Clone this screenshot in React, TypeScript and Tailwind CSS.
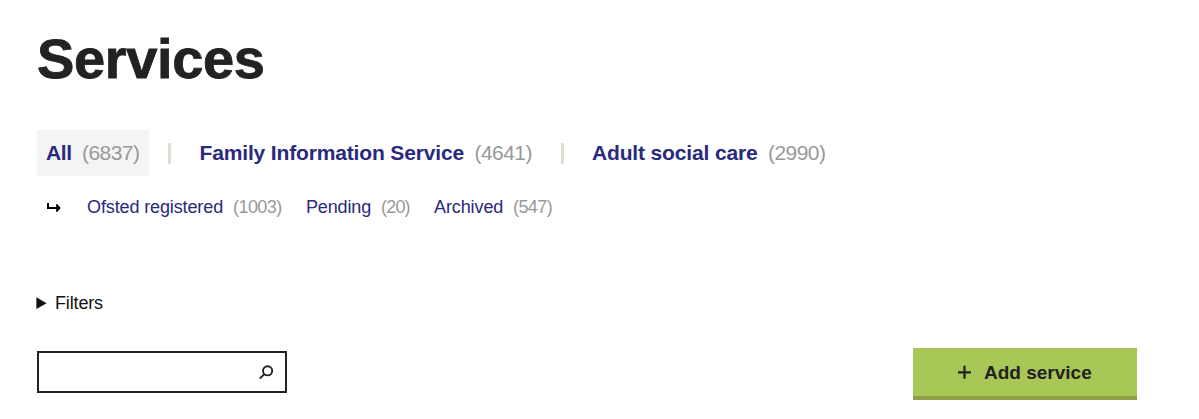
type LinkItem = { label: string; count: string; labelClass: string; countClass: string; boxClass: string };

const primary: LinkItem[] = [
  { label: "All", count: "(6837)", boxClass: "w-[112px] bg-[#f4f4f4] pl-[9px]", labelClass: "w-[36px] tracking-[-0.4px]", countClass: "tracking-[-0.55px]" },
  { label: "Family Information Service", count: "(4641)", boxClass: "w-[390px] pl-[28.5px]", labelClass: "w-[275px] tracking-[-0.15px]", countClass: "tracking-[-0.55px]" },
  { label: "Adult social care", count: "(2990)", boxClass: "pl-[28px]", labelClass: "w-[176px] tracking-[-0.15px]", countClass: "tracking-[-0.55px]" },
];

const secondary: LinkItem[] = [
  { label: "Ofsted registered", count: "(1003)", boxClass: "w-[219px]", labelClass: "w-[146px] tracking-[-0.12px]", countClass: "tracking-[-0.55px]" },
  { label: "Pending", count: "(20)", boxClass: "w-[128px]", labelClass: "w-[75px] tracking-[-0.15px]", countClass: "tracking-[-0.8px]" },
  { label: "Archived", count: "(547)", boxClass: "", labelClass: "w-[79px] tracking-[-0.1px]", countClass: "tracking-[-0.6px]" },
];

function Item({ item }: { item: LinkItem }) {
  return (
    <a href="#" className={`flex h-full shrink-0 items-center whitespace-nowrap ${item.boxClass}`}>
      <span className={`shrink-0 text-[#29297d] ${item.labelClass}`}>{item.label}</span>
      <span className={`font-normal text-[#999999] ${item.countClass}`}>{item.count}</span>
    </a>
  );
}

export default function App() {
  return (
    <main className="h-[419px] w-[1199px] overflow-hidden bg-white pl-[37px] font-['Liberation_Sans',Arial,sans-serif] text-[#222222]">
      <h1 className="h-[130px] pt-[27px] text-[56px] leading-[64px] font-bold tracking-[-0.35px] [-webkit-text-stroke:0.8px_#222222]">Services</h1>

      <nav className="flex h-[46px] items-center text-[21px] font-bold">
        <Item item={primary[0]} />
        <span className="mt-px ml-[19px] h-[21px] w-[3px] shrink-0 rounded-[1px] bg-[#e0ddd0]" />
        <Item item={primary[1]} />
        <span className="mt-px h-[21px] w-[3px] shrink-0 rounded-[1px] bg-[#e0ddd0]" />
        <Item item={primary[2]} />
      </nav>

      <nav className="mt-[15px] flex h-[32px] items-center text-[18px]">
        <svg className="mr-[26px] ml-[9px] shrink-0" width="15" height="10" viewBox="0 0 15 10">
          <path d="M2 1V6H12" fill="none" stroke="#000" strokeWidth="2" />
          <path d="M10.2 2H11.2L14.7 6L11.2 10H10.2Z" fill="#000" />
        </svg>
        {secondary.map((item) => (
          <Item key={item.label} item={item} />
        ))}
      </nav>

      <button className="mt-[68px] flex h-[24px] items-center text-[18px] tracking-[-0.15px] text-[#111111]">
        <svg className="mr-[7px]" width="11" height="12" viewBox="0 0 11 12" overflow="visible">
          <path d="M-0.6 0.3L9.6 6.2L-0.6 12Z" fill="#111" />
        </svg>
        Filters
      </button>

      <div className="mt-[33px] flex items-start justify-between pr-[62px]">
        <div className="mt-[3px] flex h-[42px] w-[250px] items-center justify-end border-2 border-[#222222] pr-[11px]">
          <input aria-label="Search" className="min-w-0 flex-1 bg-transparent px-2 outline-none" />
          <svg className="shrink-0" width="15" height="15" viewBox="0 0 15 15" fill="none" stroke="#222" strokeWidth="1.9">
            <circle cx="8.6" cy="5.8" r="4.6" />
            <path d="M5.4 9L0.8 13.6" />
          </svg>
        </div>
        <button className="flex h-[52px] w-[224px] items-center border-b-4 border-[#8ba044] bg-[#a8c756] pl-[45px] text-[19px] font-bold">
          <svg className="mr-[12px]" width="14" height="14" viewBox="0 0 14 14" stroke="#222" strokeWidth="2.3">
            <path d="M6.5 0.7V13.7M0 7.3H13" />
          </svg>
          <span className="pt-[2px]">Add service</span>
        </button>
      </div>
    </main>
  );
}
